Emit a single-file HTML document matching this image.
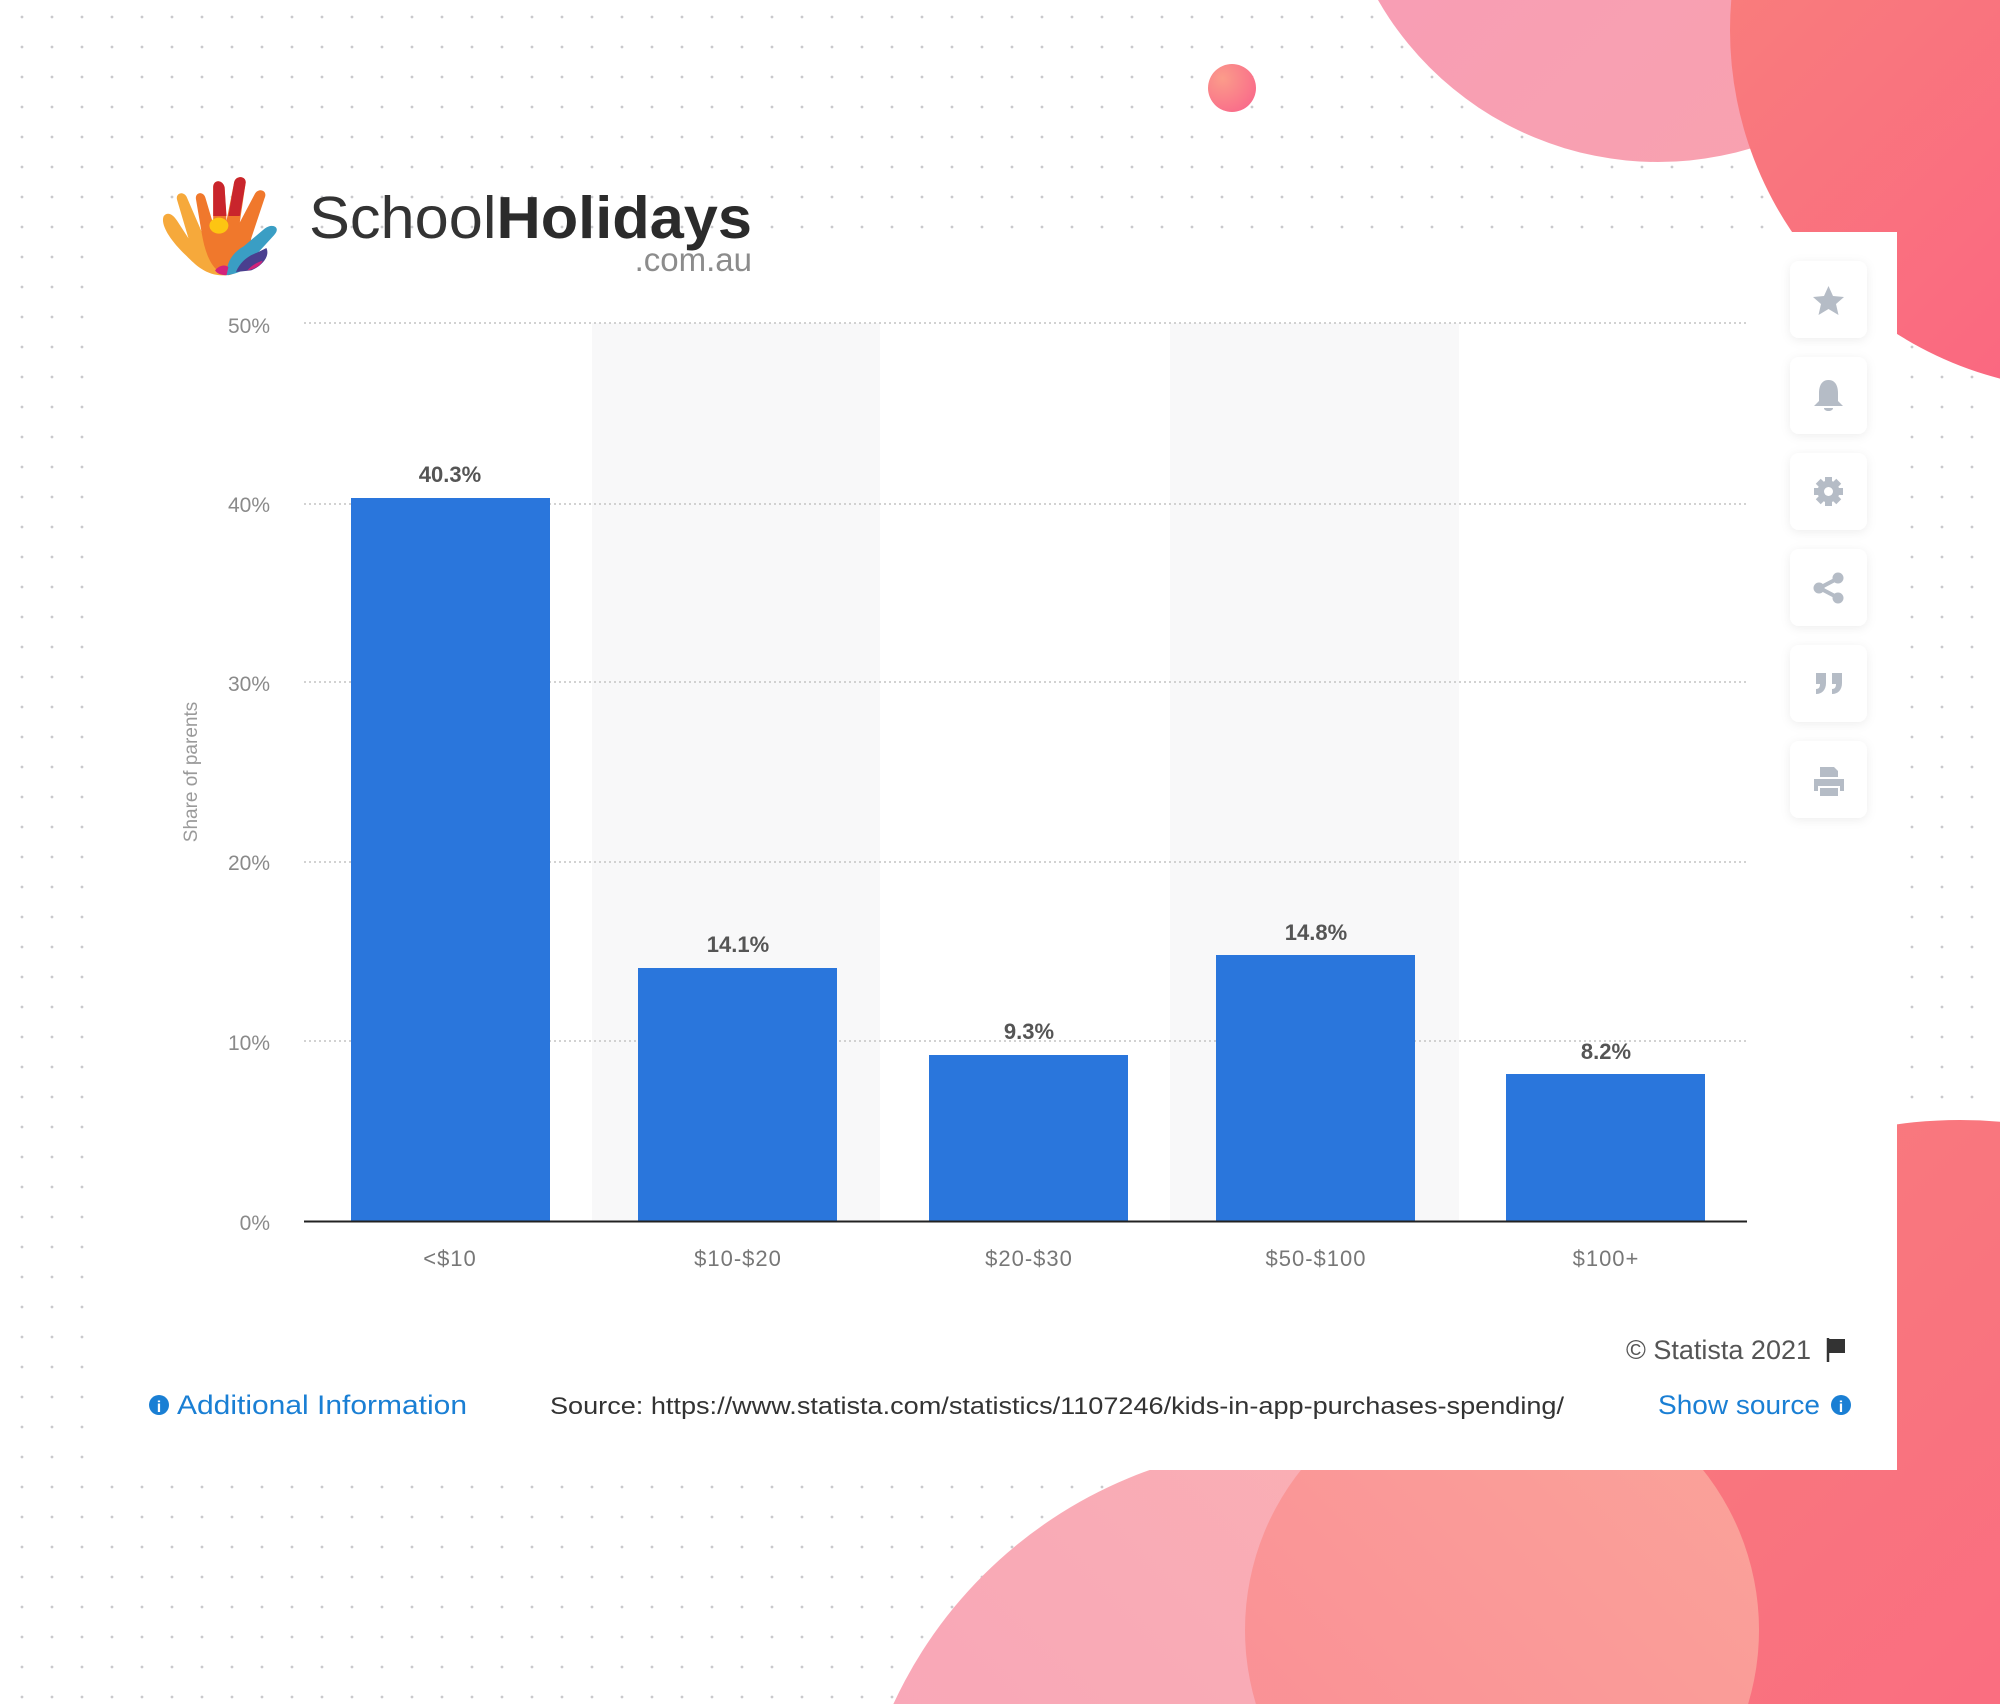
<!DOCTYPE html>
<html><head><meta charset="utf-8">
<style>
html,body{margin:0;padding:0;background:#fff;width:2000px;height:1704px;overflow:hidden;}
svg{display:block}
text{font-family:"Liberation Sans","DejaVu Sans",sans-serif}
</style></head>
<body>
<svg width="2000" height="1704" viewBox="0 0 2000 1704" xmlns="http://www.w3.org/2000/svg">
<defs>
<pattern id="dots2" x="7" y="0" width="30" height="30" patternUnits="userSpaceOnUse">
<circle cx="15" cy="17" r="1.4" fill="#c9c9cc"/>
</pattern>
<linearGradient id="gTop" x1="0" y1="0" x2="1" y2="1"><stop offset="0" stop-color="#f79ab8"/><stop offset="1" stop-color="#f9a3ae"/></linearGradient>
<linearGradient id="gRight" x1="0" y1="0" x2="1" y2="1"><stop offset="0" stop-color="#f8867a"/><stop offset="1" stop-color="#fb5a84"/></linearGradient>
<linearGradient id="gBR" x1="0" y1="0" x2="1" y2="1"><stop offset="0" stop-color="#f87e7c"/><stop offset="1" stop-color="#fb6283"/></linearGradient>
<linearGradient id="gA" x1="0" y1="1" x2="1" y2="0"><stop offset="0" stop-color="#f8a0bb"/><stop offset="1" stop-color="#fab3b2"/></linearGradient>
<linearGradient id="gB" x1="0" y1="1" x2="1" y2="0"><stop offset="0" stop-color="#f98d95"/><stop offset="1" stop-color="#fba49a"/></linearGradient>
<radialGradient id="gSmall" cx="0.3" cy="0.3" r="0.8"><stop offset="0" stop-color="#fb9c8a"/><stop offset="1" stop-color="#f96b8a"/></radialGradient>
<filter id="sh" x="-30%" y="-30%" width="160%" height="160%"><feDropShadow dx="0" dy="2" stdDeviation="5" flood-color="#000" flood-opacity="0.07"/></filter>
</defs>
<rect width="2000" height="1704" fill="url(#dots2)"/>
<circle cx="1658" cy="-161" r="323" fill="url(#gTop)"/>
<circle cx="2090" cy="30" r="360" fill="url(#gRight)"/>
<circle cx="1232" cy="88" r="24" fill="url(#gSmall)"/>
<circle cx="1960" cy="1591" r="471" fill="url(#gBR)"/>
<circle cx="1300" cy="1892" r="448" fill="url(#gA)"/>
<circle cx="1502" cy="1630" r="257" fill="url(#gB)"/>
<rect x="100" y="232" width="1797" height="1238" fill="#fff"/>
<g transform="translate(160,176) scale(0.95,0.8)">
<path d="M28 100 C10 80 0 60 4 50 C8 44 14 48 18 56 L30 78 L18 30 C16 22 24 18 28 26 L44 70 L46 80 C50 100 56 118 70 124 C50 126 38 112 28 100Z" fill="#f6a93b"/>
<path d="M44 72 L38 30 C36 20 46 18 48 28 L56 60 L56 14 C56 4 66 4 68 14 L70 56 L78 8 C80 -2 92 0 90 10 L84 58 L100 22 C104 14 114 18 110 28 L96 78 C94 100 86 122 72 124 C56 122 48 100 44 72Z" fill="#f0782c"/>
<path d="M56 50 L56 14 C56 4 66 4 68 14 L70 50Z M72 50 L78 8 C80 -2 92 0 90 10 L84 50Z" fill="#c9252c"/>
<circle cx="62" cy="62" r="10" fill="#fdc512"/>
<path d="M70 124 C70 108 76 96 88 88 L110 66 C118 58 128 64 120 74 L100 100 C96 112 86 122 70 124Z" fill="#3a9ec4"/>
<path d="M80 120 C84 108 92 100 102 96 L112 90 C116 100 108 112 96 118Z" fill="#4a3f8f"/>
<path d="M92 118 C96 112 102 108 108 106 C106 112 100 116 92 118Z" fill="#d3237a"/>
<path d="M58 118 C62 112 68 110 72 114 L70 124 C64 124 60 122 58 118Z" fill="#d3237a"/>
</g>
<text x="309" y="238" font-size="59" fill="#2b2b2b" textLength="443" lengthAdjust="spacingAndGlyphs"><tspan fill="#333">School</tspan><tspan font-weight="bold">Holidays</tspan></text>
<text x="752" y="271" font-size="33" fill="#8c8c8c" text-anchor="end">.com.au</text>
<rect x="592" y="323" width="288" height="898" fill="#f8f8f9"/>
<rect x="1170" y="323" width="289" height="898" fill="#f8f8f9"/>
<g stroke="#c4c4c4" stroke-width="1.5" stroke-dasharray="2 3">
<line x1="304" y1="323" x2="1747" y2="323"/>
<line x1="304" y1="504" x2="1747" y2="504"/>
<line x1="304" y1="682" x2="1747" y2="682"/>
<line x1="304" y1="862" x2="1747" y2="862"/>
<line x1="304" y1="1041" x2="1747" y2="1041"/>
</g>
<g font-size="21" fill="#8a8a8a" text-anchor="end">
<text x="270" y="333">50%</text>
<text x="270" y="512">40%</text>
<text x="270" y="691">30%</text>
<text x="270" y="870">20%</text>
<text x="270" y="1050">10%</text>
<text x="270" y="1230">0%</text>
</g>
<text transform="translate(197,772) rotate(-90)" font-size="19" fill="#9a9a9a" text-anchor="middle">Share of parents</text>
<g fill="#2a76dc">
<rect x="351" y="498" width="199" height="723"/>
<rect x="638" y="968" width="199" height="253"/>
<rect x="929" y="1055" width="199" height="166"/>
<rect x="1216" y="955" width="199" height="266"/>
<rect x="1506" y="1074" width="199" height="147"/>
</g>
<line x1="304" y1="1221.5" x2="1747" y2="1221.5" stroke="#222" stroke-width="2"/>
<g font-size="22" font-weight="bold" fill="#555" text-anchor="middle">
<text x="450" y="482">40.3%</text>
<text x="738" y="952">14.1%</text>
<text x="1029" y="1039">9.3%</text>
<text x="1316" y="940">14.8%</text>
<text x="1606" y="1059">8.2%</text>
</g>
<g font-size="22" fill="#777" text-anchor="middle" letter-spacing="1">
<text x="450" y="1266">&lt;$10</text>
<text x="738" y="1266">$10-$20</text>
<text x="1029" y="1266">$20-$30</text>
<text x="1316" y="1266">$50-$100</text>
<text x="1606" y="1266">$100+</text>
</g>
<g filter="url(#sh)" fill="#fff">
<rect x="1790" y="261" width="77" height="77" rx="9"/>
<rect x="1790" y="357" width="77" height="77" rx="9"/>
<rect x="1790" y="453" width="77" height="77" rx="9"/>
<rect x="1790" y="549" width="77" height="77" rx="9"/>
<rect x="1790" y="645" width="77" height="77" rx="9"/>
<rect x="1790" y="741" width="77" height="77" rx="9"/>
</g>
<g fill="#b5bcc6">
<path d="M1828.5 286 L1833 296 L1844 297 L1836 304 L1838.5 315 L1828.5 309 L1818.5 315 L1821 304 L1813 297 L1824 296Z"/>
<path d="M1828.5 380 C1821 380 1819 387 1819 393 L1819 401 L1814 406 L1843 406 L1838 401 L1838 393 C1838 387 1836 380 1828.5 380Z M1824 408 L1833 408 C1833 412 1824 412 1824 408Z"/>
<circle cx="1828.5" cy="491.5" r="11"/>
<rect x="1825" y="477" width="7" height="29"/><rect x="1814" y="488" width="29" height="7"/>
<rect x="1825" y="477" width="7" height="29" transform="rotate(45 1828.5 491.5)"/><rect x="1825" y="477" width="7" height="29" transform="rotate(-45 1828.5 491.5)"/>
<circle cx="1828.5" cy="491.5" r="4.5" fill="#fff"/>
<circle cx="1819" cy="588" r="5.5"/><circle cx="1838" cy="578" r="5.5"/><circle cx="1838" cy="598" r="5.5"/>
<path d="M1819 586 L1838 576 L1839 580 L1820 590Z M1819 590 L1838 600 L1839 596 L1820 586Z"/>
<path d="M1816 673 h10 v10 c0 7 -4 11 -10 11 v-5 c3 0 4 -2 4 -5 h-4z M1832 673 h10 v10 c0 7 -4 11 -10 11 v-5 c3 0 4 -2 4 -5 h-4z"/>
<path d="M1820 767 h14 l4 4 v6 h-18z M1814 779 h30 v12 h-4 v-5 h-22 v5 h-4z M1820 788 h18 v8 h-18z"/>
</g>
<text x="1811" y="1359" font-size="27" fill="#555" text-anchor="end">© Statista 2021</text>
<path d="M1828 1338 v24" stroke="#333" stroke-width="2.5"/><path d="M1829 1339 h16 v14 h-16z" fill="#333"/>
<circle cx="159" cy="1405" r="10" fill="#1a7fd4"/><text x="159" y="1412" font-size="16" font-weight="bold" fill="#fff" text-anchor="middle">i</text>
<text x="177" y="1414" font-size="27" fill="#1a7fd4" textLength="290" lengthAdjust="spacingAndGlyphs">Additional Information</text>
<text x="550" y="1414" font-size="24" fill="#333" textLength="1014" lengthAdjust="spacingAndGlyphs">Source: https://www.statista.com/statistics/1107246/kids-in-app-purchases-spending/</text>
<text x="1658" y="1414" font-size="27" fill="#1a7fd4" textLength="162" lengthAdjust="spacingAndGlyphs">Show source</text>
<circle cx="1841" cy="1405" r="10" fill="#1a7fd4"/><text x="1841" y="1412" font-size="16" font-weight="bold" fill="#fff" text-anchor="middle">i</text>
</svg>
</body></html>
